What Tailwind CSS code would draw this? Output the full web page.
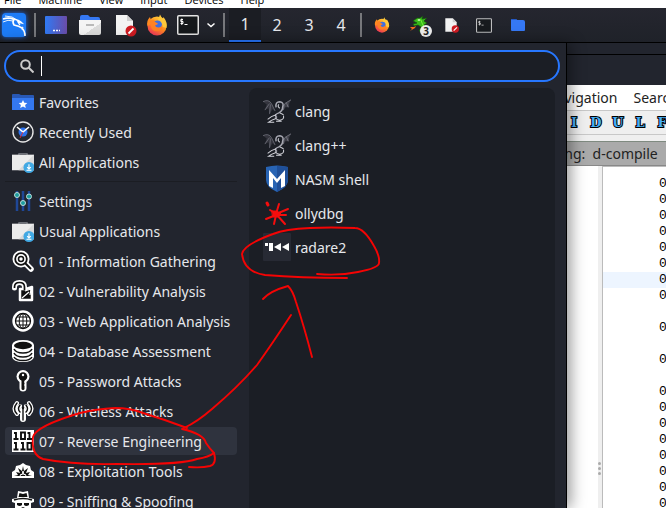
<!DOCTYPE html>
<html lang="en">
<head>
  <meta charset="UTF-8" />
  <meta name="viewport" content="width=device-width, initial-scale=1.0"/>
  <title>Kali Linux - Applications</title>
  <script src="https://cdn.jsdelivr.net/npm/@tailwindcss/browser@4"></script>
</head>
<body class="relative flex h-screen flex-col overflow-hidden bg-[#22252e] font-['Noto_Sans',sans-serif] text-[#e6e8ec]">

  <!-- Shared icons -->
  <svg class="absolute size-0">
    <defs>
      <linearGradient id="desk" x1="0" x2="1"><stop offset="0" stop-color="#2f7af5"/><stop offset="1" stop-color="#6b4ca8"/></linearGradient>
      <linearGradient id="fox" x1="0.8" y1="0" x2="0.2" y2="1"><stop offset="0" stop-color="#ffd83d"/><stop offset="0.5" stop-color="#ff8a1f"/><stop offset="1" stop-color="#f02d62"/></linearGradient>
      <linearGradient id="paper" x2="1" y2="1"><stop offset="0.6" stop-color="#f4f4f4"/><stop offset="0.6" stop-color="#dcdcdc"/></linearGradient>
    </defs>
    <symbol id="firefox" viewBox="0 0 22 22">
      <circle cx="11" cy="12" r="9.500" fill="url(#fox)"/>
      <path d="M12 6 14 0.500 Q15 3 17 4.500 L17.500 3 Q22 9 20.500 14 L14 12Z" fill="#ffc83a"/>
      <path d="M1.500 12 Q0 7 4 3 L5 6 Q7 5 9 6 L7 9Z" fill="#ff8a1f"/>
      <circle cx="11.500" cy="11" r="4.600" fill="#3f6fe0"/>
      <path d="M4 7 Q8 6 10 8.500 Q12 9 12 10 L9 11.500 Q10 14 13 13.500 Q16 13 16 10 Q18 15 13 17 Q7 18.500 5 13Z" fill="#ff8125"/>
    </symbol>
    <symbol id="doc" viewBox="0 0 22 24">
      <path d="M1 2h11l6 6v14H1z" fill="#f3f3f3"/><path d="M12 2v6h6z" fill="#cfcfcf"/>
      <circle cx="16" cy="18" r="5.500" fill="#cf1b22"/><path d="m13.500 20.500 5-5" stroke="#fff" stroke-width="1.800"/>
    </symbol>
    <symbol id="terminal" viewBox="0 0 22 20">
      <rect x="0.750" y="0.750" width="20.500" height="18.500" rx="1" fill="#15181b" stroke="#e4e4e4" stroke-width="1.500"/>
      <path d="M6 4.500H3.800v2H6v2H3.500M4.800 3.500v6.500M7.500 9.500h3" fill="none" stroke="#fff"/>
    </symbol>
    <symbol id="briefcase" viewBox="0 0 24 24">
      <path d="M7.500 5V2.800h9V5" fill="none" stroke="#6d7078" stroke-width="1.300"/>
      <path d="M0 4h24v17H0z" fill="#ececec"/><path d="M24 4v17H7z" fill="#d9d9d9"/>
      <circle cx="18.500" cy="18" r="6" fill="#42a9e4"/><path d="M18.500 14.500v5m-2-2 2 2 2-2M15.800 21h5.400" fill="none" stroke="#fff" stroke-width="1.200"/>
    </symbol>
    <symbol id="clang" viewBox="0 0 30 26">
      <path d="M0 3Q6 0 9 5L13 13L10 11L7 17L6 10L2 12L4 6Z" fill="#34353e"/>
      <path d="M0 3Q6 0 9 5L13 13M8 6 7 16M7 5 2 12" fill="none" stroke="#74757f" stroke-width="0.800"/>
      <path d="M22 12Q22 5 25 4L30 1L28 5L28 9L24 9Z" fill="#3e3f48"/>
      <path d="M22 12Q22 5 25 4L30 1M25 4 27 9" fill="none" stroke="#80818c" stroke-width="0.800"/>
      <path d="M14 9Q13 3 18 3Q23 4 21 9Q21 13 17 15Q11 17 15 20" fill="none" stroke="#a8a9b3" stroke-width="1.600"/>
      <path d="M17 6Q15 8 18 10M18 15 22 17M14 17 9 19 5 22M14 21 9 23 6 25H12M22 18Q23 22 18 23Q15 23 13 20M14 24H20" fill="none" stroke="#d4d5dc" stroke-width="1.100"/>
    </symbol>
  </svg>

  <!-- VM host menu -->
  <nav class="flex h-2 shrink-0 items-end gap-[17px] overflow-hidden bg-white pb-[2px] pl-1 font-['Open_Sans',sans-serif] text-[11px] leading-3 text-black">
    <a href="#">File</a>
    <a href="#">Machine</a>
    <a href="#">View</a>
    <a href="#">Input</a>
    <a href="#">Devices</a>
    <a href="#">Help</a>
  </nav>

  <!-- Panel -->
  <header class="flex h-[35px] shrink-0 items-center border-b border-black bg-linear-to-b from-[#25262f] to-[#1f2229] pl-[2px]">
    <button aria-label="Kali menu" class="mr-2 rounded-sm bg-[#1d7cf8] shadow-[0_0_5px_#1d6ff2]">
      <svg class="size-6" viewBox="0 0 24 24" fill="none" stroke="#fff">
        <path d="M1 6Q7 4 12 6.500Q10 9 12 12Q17 13 20 15Q23 18 23 23" stroke-width="1.600"/>
        <path d="M3 3Q11 3 15 7M1 9Q6 6 11 8" stroke-width="0.900"/>
        <path d="M11 6Q17 7 20 10L16 9Q17 11 18 12" stroke-width="1.300"/>
        <path d="M19 15 21 14 20 17" stroke-width="0.900"/>
      </svg>
    </button>
    <span class="mr-[9px] h-6 w-[2px] bg-[#77787c]"></span>
    <div class="flex items-center gap-3">
      <button aria-label="Show desktop"><svg class="h-[18px] w-[22px]" viewBox="0 0 22 18"><rect width="22" height="18" rx="1" fill="url(#desk)"/><path d="M8 14.500h2m1 0h2m1 0h1" stroke="#fff" stroke-width="1.500"/></svg></button>
      <button aria-label="Files"><svg class="h-5 w-[22px]" viewBox="0 0 22 20"><path d="M1 2q0-2 2-2h6l2 2h8q2 0 2 2v4H1z" fill="#3578f4"/><path d="M0 5h22v13q0 2-2 2H2q-2 0-2-2z" fill="url(#paper)"/><path d="M7 10h8" stroke="#b9b9b9" stroke-width="2"/></svg></button>
      <button aria-label="Text editor" class="pl-[2px]"><svg class="h-6 w-[22px]"><use href="#doc"/></svg></button>
      <button aria-label="Firefox" class="-ml-[3px]"><svg class="size-[22px]"><use href="#firefox"/></svg></button>
      <button aria-label="Terminal" class="-ml-[3px]"><svg class="h-5 w-[22px]"><use href="#terminal"/></svg></button>
    </div>
    <button aria-label="More terminals" class="mr-2 ml-2"><svg class="size-2" viewBox="0 0 8 8"><path d="m0.500 2.500 3.500 3 3.500-3" fill="none" stroke="#fff" stroke-width="1.500"/></svg></button>
    <span class="mr-1 h-6 w-[2px] bg-[#77787c]"></span>
    <div class="flex h-full text-base">
      <button class="w-8 border-b-2 border-[#2777ff] bg-[#1b1d23]">1</button>
      <button class="w-8">2</button>
      <button class="w-8">3</button>
      <button class="w-8">4</button>
    </div>
    <span class="mr-3 ml-[3px] h-6 w-[2px] bg-[#77787c]"></span>
    <div class="flex items-center gap-4">
      <button aria-label="Firefox window"><svg class="size-4"><use href="#firefox"/></svg></button>
      <button aria-label="Ghidra, 3 windows" class="relative ml-1 -mr-[2px]">
        <svg class="h-[18px] w-5" viewBox="0 0 20 18">
          <path d="M3 5 7 2 10 2 13 0 12 3 17 2 14 5 17 7 14 9 16 12 13 17 9 15 11 11 8 9 4 10 3 8 7 7Z" fill="#39b91c" stroke="#154d10" stroke-width="0.700"/>
          <path d="M7 4 11 4 12 7 14 11M11 15 14 14" fill="none" stroke="#72ef36"/><path d="M8 4h2" stroke="#fff"/>
          <path d="M6 10 4 11 0 11 2 13 0 15 5 12" fill="#f46b1e"/>
        </svg>
        <span class="absolute top-[9px] left-[10px] flex size-3 items-center justify-center rounded-full bg-[#eee] text-[10px] font-bold text-[#222]">3</span>
      </button>
      <button aria-label="Text editor window"><svg class="size-4"><use href="#doc"/></svg></button>
      <button aria-label="Terminal window"><svg class="h-[15px] w-4 opacity-80"><use href="#terminal"/></svg></button>
      <button aria-label="Files window" class="ml-[2px]"><svg class="h-3 w-4" viewBox="0 0 16 12"><path d="M1 1q0-1 1-1h4l1 1h6q2 0 2 2v8q0 1-1 1H2q-1 0-1-1z" fill="#3578f4"/><path d="M1 1q0-1 1-1h4l1 1H2z" fill="#2358c4"/></svg></button>
    </div>
  </header>

  <div class="relative min-h-0 flex-1">

    <!-- Ghidra window -->
    <main class="flex h-full flex-col pt-[11px] text-[#222]">
      <div class="h-[31px] shrink-0 border-t border-black bg-[#22252e]"></div>
      <div class="flex h-[25px] shrink-0 items-center gap-4 bg-white pl-[546px] text-[14px] whitespace-nowrap">
        <a href="#">Navigation</a>
        <a href="#">Search</a>
      </div>
      <div class="flex h-[25px] shrink-0 items-center border-y border-[#c8c8c8] bg-[#efefef] pl-[563px] font-['DejaVu_Serif',serif] text-[13px] font-bold text-[#45adf5] [-webkit-text-stroke:2px_#000] [paint-order:stroke_fill]">
        <button class="w-[22px] shrink-0">I</button>
        <button class="w-[22px] shrink-0">D</button>
        <button class="w-[22px] shrink-0">U</button>
        <button class="w-[22px] shrink-0">L</button>
        <button class="w-[22px] shrink-0">F</button>
      </div>
      <div class="h-[7px] shrink-0 border-b border-[#7f8a80] bg-[#efefef]"></div>
      <h2 class="flex h-6 shrink-0 items-center border-b border-[#888] bg-[#aaa] pl-[538px] text-[14px] whitespace-pre">Listing:  d-compile</h2>
      <div class="flex min-h-0 flex-1 bg-white">
        <div class="w-[598px] shrink-0"></div>
        <div class="relative w-1 shrink-0 bg-[#efefef]">
          <span class="absolute top-[296px] left-0 flex flex-col gap-[2px]">
            <i class="size-[3px] rounded-full bg-[#aaa]"></i>
            <i class="size-[3px] rounded-full bg-[#aaa]"></i>
            <i class="size-[3px] rounded-full bg-[#aaa]"></i>
          </span>
        </div>
        <div class="min-w-0 flex-1 overflow-hidden border-t border-l border-[#bbb] pt-[9px] font-['Liberation_Mono',monospace] text-[13px] leading-4 text-black *:h-4 *:pl-[56px]">
          <p>0</p>
          <p>0</p>
          <p>0</p>
          <p>0</p>
          <p>0</p>
          <p>0</p>
          <p class="bg-[#edf5ff]">0</p>
          <p>0</p>
          <p></p>
          <p>0</p>
          <p></p>
          <p>0</p>
          <p></p>
          <p>0</p>
          <p>0</p>
          <p>0</p>
          <p>0</p>
          <p>0</p>
          <p>0</p>
          <p>0</p>
          <p>0</p>
        </div>
      </div>
    </main>

    <!-- Whisker menu -->
    <section class="absolute inset-y-0 left-0 flex w-[567px] flex-col border-r border-black bg-[#22252e] pt-[7px] shadow-[4px_0_14px_#00000066]">
      <label class="mr-[6px] ml-1 flex h-8 shrink-0 items-center rounded-full border-2 border-[#2777ff] bg-[#1b1e25] pl-[14px]">
        <svg class="mr-[7px] size-[14px]" viewBox="0 0 14 14" fill="none" stroke="#ccc" stroke-width="2"><circle cx="5.500" cy="5.500" r="4.300"/><path d="m8.500 8.500 5 5"/></svg>
        <span class="h-5 w-px bg-white"></span>
        <input type="text" aria-label="Search applications" class="min-w-0 flex-1 bg-transparent px-1 text-[14px] outline-none" />
      </label>
      <div class="flex min-h-0 flex-1 overflow-hidden pt-[6px]">

        <!-- Categories -->
        <nav class="ml-[5px] flex w-[232px] shrink-0 flex-col gap-[2px] text-[14px] whitespace-nowrap [&>a]:flex [&>a]:h-7 [&>a]:shrink-0 [&>a]:items-center [&>a]:gap-[5px] [&>a]:rounded-sm [&>a]:px-[7px] [&_svg]:size-[22px] [&_svg]:shrink-0">
          <a href="#"><svg viewBox="0 0 22 22"><path d="M0 4q0-1 1-1h6l2 1h12q1 0 1 1v13H0z" fill="#2858b5"/><path d="M0 7h22v12H0z" fill="#3478f0"/><path d="m11 9 1.300 2.700 3 .3-2.200 2 .7 3-2.800-1.600L8.200 17l.7-3-2.200-2 3-.3z" fill="#fff"/></svg>Favorites</a>
          <a href="#"><svg viewBox="0 0 22 22"><circle cx="11" cy="11" r="10" fill="#242831" stroke="#e6e6e6" stroke-width="1.400"/><circle cx="11" cy="11" r="4.500" fill="#2c72ed"/><path d="m5 6 6 5 6-5" fill="none" stroke="#fff" stroke-width="1.600"/><path d="m11 11-3 6" stroke="#d92b36"/></svg>Recently Used</a>
          <a href="#"><svg><use href="#briefcase"/></svg>All Applications</a>
          <hr class="my-[3px] border-t border-[#1b1d23]" />
          <a href="#"><svg viewBox="0 0 22 22"><path d="M5 1v20M11 1v20M17 1v20" stroke="#1f4796" stroke-width="2.500"/><g fill="#1c9c9e" stroke="#bddad9"><circle cx="5" cy="5" r="2.500"/><circle cx="11" cy="13" r="2.500"/><circle cx="17" cy="6.500" r="2.500"/></g></svg>Settings</a>
          <a href="#"><svg><use href="#briefcase"/></svg>Usual Applications</a>
          <a href="#"><svg viewBox="0 0 22 22" fill="none"><path d="m13 13 6 6" stroke="#fff" stroke-width="5.500" stroke-linecap="round"/><circle cx="9" cy="9" r="8.500" fill="#fff"/><path d="m13 13 6 6" stroke="#111" stroke-width="2"/><circle cx="9" cy="9" r="5.800" stroke="#111" stroke-width="1.800"/><circle cx="9" cy="9" r="2.500" stroke="#111" stroke-width="1.500"/></svg>01 - Information Gathering</a>
          <a href="#"><svg viewBox="0 0 22 22"><path d="M2.500 8V7q0-4.500 5-4.500t5 4.500v4" fill="none" stroke="#fff" stroke-width="5" stroke-linecap="round"/><path d="M8 9h6l6-2v13H8z" fill="#111" stroke="#fff" stroke-width="2.500" stroke-linejoin="round"/><path d="M2.500 8V7q0-4.500 5-4.500t5 4.500v3" fill="none" stroke="#111" stroke-width="1.700"/><path d="m10 18 7-6m-4-1 6-2-1 6" fill="none" stroke="#fff" stroke-width="1.200"/></svg>02 - Vulnerability Analysis</a>
          <a href="#"><svg viewBox="0 0 22 22" fill="none" stroke="#111"><circle cx="11" cy="11" r="10.700" fill="#fff" stroke="none"/><circle cx="11" cy="11" r="7.500" stroke-width="1.300"/><ellipse cx="11" cy="11" rx="3.800" ry="7.500"/><path d="M11 3.500v15M3.500 11h15M5 7h12M5 15h12"/></svg>03 - Web Application Analysis</a>
          <a href="#"><svg viewBox="0 0 22 22"><path d="M0 5q1-5 11-5t11 5v12q-1 5-11 5T0 17z" fill="#fff"/><ellipse cx="11" cy="5.500" rx="9" ry="3.700" fill="#111"/><path d="M2 9q2 4 9 4t9-4M2 13q2 4 9 4t9-4M2 17q2 3.500 9 3.500t9-3.500" fill="none" stroke="#111" stroke-width="1.500"/></svg>04 - Database Assessment</a>
          <a href="#"><svg viewBox="0 0 22 22"><path d="M11 6v12" stroke="#fff" stroke-width="7" stroke-linecap="round"/><circle cx="11" cy="6.500" r="6.500" fill="#fff"/><circle cx="11" cy="6.500" r="4.300" fill="#111"/><path d="M11 8v10.500" stroke="#111" stroke-width="3" stroke-linecap="round"/><circle cx="11" cy="5" r="1.200" fill="#fff"/><path d="M12 12h2m-2 3h2" stroke="#fff"/></svg>05 - Password Attacks</a>
          <a href="#"><svg viewBox="0 0 22 22" fill="none" stroke-linecap="round"><path d="M5 3q-5 6 0 11M17 3q5 6 0 11M8 6q-3 3 0 6M14 6q3 3 0 6" stroke="#fff" stroke-width="4"/><path d="M11 10v9" stroke="#fff" stroke-width="6"/><path d="M5 3q-5 6 0 11M17 3q5 6 0 11M8 5q-3 4 0 7M14 5q3 4 0 7M11 9v11" stroke="#111" stroke-width="1.400"/><circle cx="11" cy="8" r="1.200" fill="#111"/></svg>06 - Wireless Attacks</a>
          <a href="#" class="bg-[#2f333e]"><svg viewBox="0 0 22 22"><path d="M0 0h22v22H0z" fill="#fff"/><g fill="none" stroke="#111" stroke-width="1.900"><path d="M2 3h2v6M1.500 9h5M9 2.500h4V9H9zM15.500 3h2v6M15 9h5M2 13h2v6M1.500 19.500h5M9 13h2v6M8.500 19.500h5M15.500 13h4v6.500h-4z"/></g></svg>07 - Reverse Engineering</a>
          <a href="#"><svg viewBox="0 0 22 22"><path d="M0 18v-6l3-2 1-4 4-1 3-2 3 2 4 1 1 4 3 2v6z" fill="#fff"/><path d="m2 16 4-1-2-3 4 1-2-5 4 3 1-5 1 5 4-3-2 5 4-1-2 3 4 1z" fill="#111"/><path d="m8 16 1-2 1 1 1-4 1 4 1-1 1 2" fill="none" stroke="#fff"/></svg>08 - Exploitation Tools</a>
          <a href="#"><svg viewBox="0 0 22 22"><path d="m5 8 1-7 5 1 5-1 1 7 5 1v3l-3 1v5l-4 4H7l-4-4v-5l-3-1V9z" fill="#fff"/><path d="m6.500 7 1-4 3.500 1 3.500-1 1 4z" fill="#111"/><path d="M2 10q9-3 18 0" fill="none" stroke="#111" stroke-width="1.500"/><path d="M5 13h5v2q-2 2-5 0zm7 0h5v2q-3 2-5 0zM7 19l4-2 4 2-4 2z" fill="#111"/></svg>09 - Sniffing &amp; Spoofing</a>
        </nav>

        <!-- Applications -->
        <div class="mr-[11px] ml-3 flex flex-1 flex-col rounded-t-lg bg-[#1b1e25] px-[14px] pt-[6px] text-[14px] [&>a]:flex [&>a]:h-[34px] [&>a]:shrink-0 [&>a]:items-center [&>a]:gap-1 [&_svg]:size-7">
          <a href="#"><svg><use href="#clang"/></svg>clang</a>
          <a href="#"><svg><use href="#clang"/></svg>clang++</a>
          <a href="#"><svg viewBox="0 0 28 28"><path d="M3 2Q14-1 25 2v13q0 7-11 12Q3 22 3 15z" fill="#2864b4"/><path d="M14 1q7 0 11 1v13q0 7-11 12z" fill="#1f4f98"/><path d="M6 21V5l8 9 8-9v16l-4 2V13l-4 5-4-5v10z" fill="#fff"/></svg>NASM shell</a>
          <a href="#"><svg viewBox="0 0 28 28" fill="none" stroke="#f60d0d" stroke-linecap="round"><path d="m13 15 3-10M13 15l12-5M14 16l8 9M13 16l-2 9M13 16 3 20M12 14l-5-3M17 16l6 0" stroke-width="2"/><path d="m9 12 5 0 4 3-3 3-5 0z" fill="#f60d0d"/><path d="m4 4 1 2" stroke-width="3"/></svg>ollydbg</a>
          <a href="#"><svg viewBox="0 0 28 28"><rect width="28" height="28" rx="1" fill="#272a34"/><g fill="#fff"><path d="M2 10h3v3H2zM6 10h4v8H6zM11 14l7-4v8zM19 14l7-4v8z"/></g></svg>radare2</a>
        </div>
      </div>
    </section>
  </div>

  <!-- Freehand annotations -->
  <svg class="pointer-events-none absolute top-0 left-0 h-[508px] w-[666px]" viewBox="0 0 666 508" fill="none" stroke="#f40404" stroke-width="1.900" stroke-linecap="round" stroke-linejoin="round">
    <path d="M317 274Q339 276 358 272Q379 268 379 263Q380 256 374 246Q364 228 355 228Q330 227 310 228Q285 229 273 234Q243 245 242 254Q244 272 265 275Q300 278 347 278"/>
    <path d="M263 299Q270 291 288 286Q293 291 296 302Q304 326 312 357"/>
    <path d="M291 315Q272 344 257 365Q238 387 212 409Q197 422 184 428"/>
    <path d="M187 428Q166 420 143 413Q130 408 115 408Q96 409 80 413Q36 426 33 437Q31 455 43 459Q73 465 117 464Q180 465 197 459Q209 457 214 453"/>
    <path d="M182 429Q204 434 206 443Q210 449 214 453Q217 464 210 466Q202 468 189 467"/>
  </svg>
</body>
</html>
